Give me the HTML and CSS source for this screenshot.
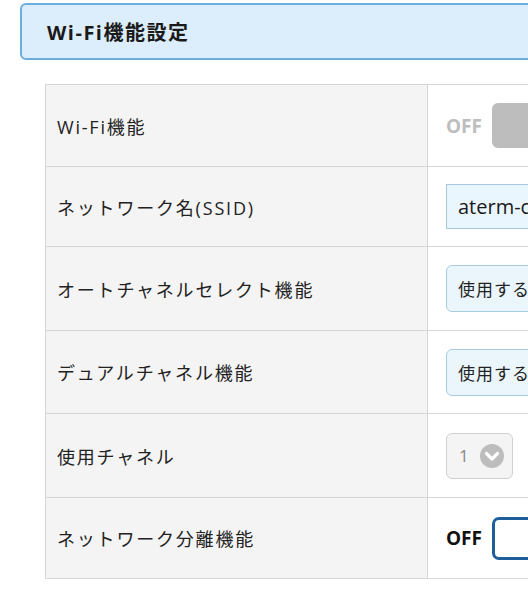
FILE: index.html
```html
<!DOCTYPE html>
<html lang="ja">
<head>
    <meta charset="UTF-8">
    <title>Wi-Fi機能設定</title>
    <link rel="stylesheet" href="styles.css">
</head>
<body>
    <div class="page">
        <h2 class="section-title">Wi-Fi機能設定</h2>

        <table class="setting-table">
            <tr>
                <th>Wi-Fi機能</th>
                <td>
                    <div class="toggle disabled">
                        <span class="toggle-label">OFF</span>
                        <span class="toggle-box"></span>
                    </div>
                </td>
            </tr>
            <tr>
                <th>ネットワーク名(SSID)</th>
                <td><input type="text" class="text-input" value="aterm-c1a2b3-g"></td>
            </tr>
            <tr>
                <th>オートチャネルセレクト機能</th>
                <td><div class="select-box">使用する</div></td>
            </tr>
            <tr>
                <th>デュアルチャネル機能</th>
                <td><div class="select-box">使用する</div></td>
            </tr>
            <tr>
                <th>使用チャネル</th>
                <td>
                    <div class="channel-select">
                        <span class="channel-value">1</span>
                        <span class="channel-arrow">
                            <svg width="24" height="24" viewBox="0 0 24 24">
                                <circle cx="12" cy="12" r="12" fill="#bdbdbd"/>
                                <path d="M6.5 9.5 L12 15 L17.5 9.5" fill="none" stroke="#fff" stroke-width="3.2" stroke-linecap="round" stroke-linejoin="round"/>
                            </svg>
                        </span>
                    </div>
                </td>
            </tr>
            <tr>
                <th>ネットワーク分離機能</th>
                <td>
                    <div class="toggle">
                        <span class="toggle-label">OFF</span>
                        <span class="toggle-box"></span>
                    </div>
                </td>
            </tr>
        </table>
    </div>
</body>
</html>
```

FILE: styles.css
```css
html, body {
    overflow: hidden;
}

body {
    margin: 0;
    background: #ffffff;
    color: #222222;
    font-family: 'Open Sans', 'Noto Sans CJK JP', sans-serif;
}

.page {
    width: 820px;
    padding: 3px 0 0 20px;
}

.section-title {
    margin: 0;
    height: 53px;
    padding-left: 25px;
    display: flex;
    align-items: center;
    background: #dcedfb;
    border: 2px solid #6aaede;
    border-radius: 6px;
    font-size: 20px;
    font-weight: 700;
    letter-spacing: 1.5px;
    color: #1a1a1a;
}

.setting-table {
    margin: 24px 0 0 25px;
    width: 780px;
    border-collapse: collapse;
}

.setting-table th,
.setting-table td {
    border: 1px solid #d6d6d6;
    padding: 0;
}

.setting-table th {
    width: 370px;
    padding-left: 11px;
    background: #f4f4f4;
    text-align: left;
    font-weight: 400;
    font-size: 18px;
    letter-spacing: 1.8px;
    color: #222222;
}

.setting-table td {
    padding-left: 18px;
}

.setting-table tr:nth-child(1) { height: 82px; }
.setting-table tr:nth-child(2) { height: 80px; }
.setting-table tr:nth-child(3) { height: 84px; }
.setting-table tr:nth-child(4) { height: 83px; }
.setting-table tr:nth-child(5) { height: 84px; }
.setting-table tr:nth-child(6) { height: 81px; }

.toggle {
    display: flex;
    align-items: center;
    gap: 7px;
}

.toggle-label {
    font-size: 19px;
    font-weight: 700;
    color: #111111;
    width: 39px;
}

.toggle-box {
    width: 120px;
    height: 37px;
    border: 3px solid #1e5f9b;
    border-radius: 7px;
    background: #ffffff;
}

.toggle.disabled .toggle-label {
    color: #bdbdbd;
}

.toggle.disabled .toggle-box {
    height: 39px;
    border: 3px solid #bdbdbd;
    background: #bdbdbd;
    border-radius: 6px;
}

.text-input {
    box-sizing: border-box;
    width: 320px;
    height: 45px;
    padding: 0 11px;
    border: 1px solid #a6c8dd;
    background: #eaf6fd;
    font-family: 'Open Sans', 'Noto Sans CJK JP', sans-serif;
    font-size: 20px;
    color: #1a1a1a;
    display: block;
}

.select-box {
    box-sizing: border-box;
    width: 300px;
    height: 47px;
    padding-left: 11px;
    display: flex;
    align-items: center;
    border: 1px solid #a9cbe0;
    border-radius: 6px;
    background: #eaf5fc;
    font-size: 17px;
    letter-spacing: 1px;
    color: #222222;
}

.channel-select {
    box-sizing: border-box;
    width: 67px;
    height: 46px;
    padding: 0 8px 0 12px;
    display: flex;
    align-items: center;
    justify-content: space-between;
    border: 1px solid #d0d0d0;
    border-radius: 6px;
    background: #f4f4f4;
}

.channel-value {
    font-size: 17px;
    color: #888888;
}

.channel-arrow svg {
    display: block;
}
```
